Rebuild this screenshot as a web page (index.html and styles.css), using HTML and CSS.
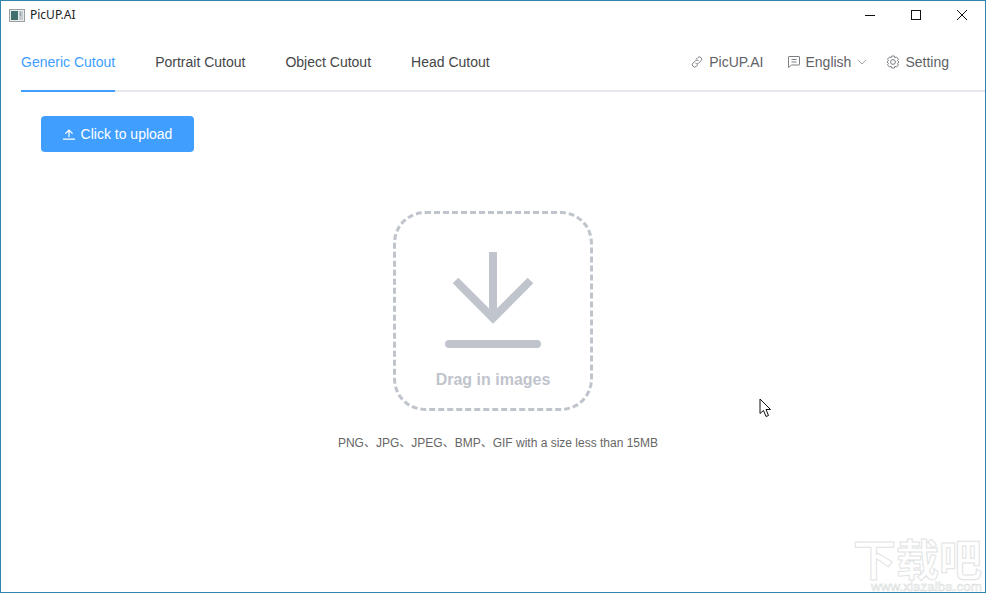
FILE: index.html
```html
<!DOCTYPE html>
<html lang="en">
<head>
<meta charset="utf-8">
<title>PicUP.AI</title>
<link rel="stylesheet" href="styles.css">
</head>
<body>
<div class="window">
  <header class="titlebar">
    <div class="brand">
      <svg class="app-icon" width="16" height="13" viewBox="0 0 16 13"><rect x="0.5" y="0.5" width="15" height="12" fill="#e8ecec" stroke="#9a9f9f"/><rect x="2" y="2" width="7" height="9" fill="#3f6f6c"/><rect x="10" y="2" width="4" height="9" fill="#c3cbd0"/><rect x="11" y="3" width="1" height="4" fill="#8fa0a8"/></svg>
      <span class="app-name">PicUP.AI</span>
    </div>
    <div class="controls">
      <svg class="ctl" width="46" height="30" viewBox="0 0 46 30"><path d="M18 15.5H28" stroke="#111" fill="none"/></svg>
      <svg class="ctl" width="46" height="30" viewBox="0 0 46 30"><rect x="18.5" y="10.5" width="9" height="9" stroke="#111" fill="none"/></svg>
      <svg class="ctl" width="46" height="30" viewBox="0 0 46 30"><path d="M18 10L28 20M28 10L18 20" stroke="#111" fill="none"/></svg>
    </div>
  </header>
  <nav class="nav">
    <div class="tabs">
      <a class="tab tab-active">Generic Cutout</a>
      <a class="tab">Portrait Cutout</a>
      <a class="tab">Object Cutout</a>
      <a class="tab">Head Cutout</a>
    </div>
    <div class="links">
      <span class="link link-wide">
        <svg width="12" height="12" viewBox="0 0 12 12" fill="none" stroke="#7d8085" stroke-width="1"><path d="M5 3.4L6.8 1.6a2.2 2.2 0 0 1 3.2 0 2.2 2.2 0 0 1 0 3.2L7.5 7.3a2.1 2.1 0 0 1-3 0"/><path d="M7 8.6L5.2 10.4a2.2 2.2 0 0 1-3.2 0 2.2 2.2 0 0 1 0-3.2L4.5 4.7a2.1 2.1 0 0 1 3 0"/></svg>
        PicUP.AI
      </span>
      <span class="link">
        <svg width="12" height="12" viewBox="0 0 12 12" fill="none" stroke="#7d8085" stroke-width="1"><path d="M1 .5H11a.5.5 0 0 1 .5.5V8.5a.5.5 0 0 1-.5.5H3.5L.5 11.5V1a.5.5 0 0 1 .5-.5Z"/><path d="M3.5 3.5H8.5M3.5 6H8.5"/></svg>
        English
        <svg class="chev" width="10" height="6" viewBox="0 0 10 6" fill="none" stroke="#a0a3a8"><path d="M1 1L5 5L9 1"/></svg>
      </span>
      <span class="link">
        <svg width="14" height="14" viewBox="0 0 14 14" fill="none" stroke="#7d8085" stroke-width="1"><path d="M5.6 1H8.4L8.9 2.7 10.5 2 12.5 4.2 11.5 5.6 13 7 11.5 8.4 12.5 9.8 10.5 12 8.9 11.3 8.4 13H5.6L5.1 11.3 3.5 12 1.5 9.8 2.5 8.4 1 7 2.5 5.6 1.5 4.2 3.5 2 5.1 2.7Z" stroke-linejoin="round"/><circle cx="7" cy="7" r="2.4"/></svg>
        Setting
      </span>
    </div>
  </nav>
  <main class="content">
    <button class="upload" type="button">
      <svg width="12" height="11" viewBox="0 0 12 11" fill="none" stroke="#fff" stroke-width="1.2"><path d="M6 8V1.2M2.4 4.6L6 1.2L9.6 4.6M0 10.2H12"/></svg>
      Click to upload
    </button>
    <section class="drop-area">
      <div class="drop">
        <svg class="drop-icon" width="96" height="97" viewBox="0 0 96 97" fill="none" stroke="#c0c4cc" stroke-width="8"><path d="M48 0V62"/><path d="M10.5 28.5L48 66L85.5 28.5"/><path d="M4 92H92" stroke-linecap="round"/></svg>
        <span class="drop-text">Drag in images</span>
      </div>
      <p class="hint">PNG、JPG、JPEG、BMP、GIF with a size less than 15MB</p>
    </section>
  </main>
  <svg class="cursor" width="14" height="20" viewBox="0 0 14 20"><path d="M1 1V15.5L4.5 12.5L7 18.5L9.5 17.5L7 11.5H11.5Z" fill="#fff" stroke="#111" stroke-linejoin="round"/></svg>
  <div class="watermark">
    <span class="wm-cn">下载吧</span>
    <span class="wm-en">www.xiazaiba.com</span>
  </div>
</div>
</body>
</html>
```
FILE: styles.css
```css
* { box-sizing: border-box; }
html, body { margin: 0; padding: 0; }
body { width: 986px; height: 593px; overflow: hidden; background: #fff; font-family: "Liberation Sans", "Noto Sans CJK SC", sans-serif; }
.window { position: relative; width: 986px; height: 593px; border: 1px solid #2e86ad; display: flex; flex-direction: column; overflow: hidden; }
.titlebar { height: 29px; flex: none; display: flex; justify-content: space-between; align-items: center; padding-left: 8px; }
.brand { display: flex; align-items: center; gap: 5px; margin-top: -1px; }
.app-icon { display: block; }
.app-name { font: 12px "Noto Sans", sans-serif; color: #222; line-height: 16px; }
.controls { display: flex; margin-top: -1px; }
.ctl { display: block; }
.nav { height: 62px; flex: none; margin-left: 20px; display: flex; justify-content: space-between; border-bottom: 2px solid #e4e7ed; padding-right: 36px; }
.tabs { display: flex; gap: 40px; }
.tab { display: block; font-size: 14px; line-height: 60px; height: 62px; padding-top: 2px; color: #303133; opacity: .9; }
.tab-active { color: #409eff; border-bottom: 2px solid #409eff; opacity: 1; }
.links { display: flex; gap: 26px; align-items: center; height: 60px; padding-top: 4px; }
.link { display: flex; align-items: center; gap: 5px; font-size: 14px; color: #606266; }
.link-wide { gap: 6px; margin-right: -1px; }
.chev { margin-left: 1px; margin-right: -7px; }
.content { flex: 1; position: relative; padding: 24px 0 0 40px; }
.upload { display: flex; align-items: center; gap: 6px; height: 36px; width: 153px; justify-content: center; border: 0; border-radius: 4px; background: #409eff; color: #fff; font: 14px "Liberation Sans", sans-serif; padding: 0; }
.drop-area { display: flex; flex-direction: column; align-items: center; margin: 59px 0 0 -40px; }
.drop { width: 200px; height: 200px; border: 3px dashed #c0c4cc; border-radius: 32px; display: flex; flex-direction: column; align-items: center; padding-top: 38px; }
.drop-icon { display: block; }
.drop-text { margin-top: 21px; font-size: 16px; font-weight: bold; line-height: 20px; color: #c0c4cc; }
.hint { margin: 25px 0 0; padding-left: 10px; font-size: 12px; line-height: 14px; color: #666; }
.cursor { position: absolute; left: 758px; top: 397px; }
.watermark { position: absolute; left: 850px; top: 535px; width: 131px; display: flex; flex-direction: column; align-items: flex-end; }
.wm-cn { font: bold 43px/42px "Noto Sans CJK SC", sans-serif; color: #fff; -webkit-text-stroke: 1px #dfe3e3; white-space: nowrap; }
.wm-en { margin-top: 2px; font: 13.5px/14px "Liberation Sans", sans-serif; color: #fff; -webkit-text-stroke: .5px #d4d8d8; white-space: nowrap; }
```
